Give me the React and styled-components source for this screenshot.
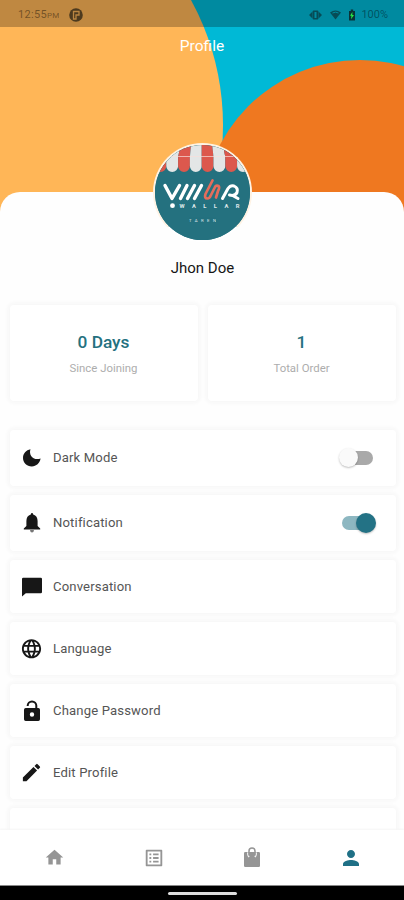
import React from "react";
import styled, { createGlobalStyle } from "styled-components";
import {
  MdHome,
  MdListAlt,
  MdPerson,
  MdLanguage,
  MdEdit,
} from "react-icons/md";

const GlobalStyle = createGlobalStyle`
  * { box-sizing: border-box; }
  body { margin: 0; background: #fff; font-family: Roboto, "Liberation Sans", sans-serif; }
`;

const Screen = styled.main`
  position: relative;
  display: flex;
  flex-direction: column;
  width: 404px;
  height: 900px;
  overflow: hidden;
  background: #fefefe;
`;

const Hero = styled.header`
  position: relative;
  flex: 0 0 192px;
`;

const HeroArt = styled.svg`
  position: absolute;
  top: 0;
  left: 0;
  display: block;
`;

const StatusBar = styled.div`
  position: relative;
  display: flex;
  align-items: center;
  height: 27px;
  padding: 2px 16px 0 18px;
  background: rgba(0, 0, 0, 0.25);
  color: rgba(0, 0, 0, 0.42);
  font-size: 11px;
  letter-spacing: 0.3px;
`;

const Meridiem = styled.span`
  font-size: 8px;
  padding-top: 2px;
`;

const StatusBadge = styled.svg`
  margin-left: 9px;
`;

const StatusRight = styled.div`
  display: flex;
  align-items: center;
  margin-left: auto;
  letter-spacing: 0;
`;

const StatusIcons = styled.svg`
  margin-right: 3px;
`;

const Title = styled.h1`
  position: relative;
  margin: 9px 0 0;
  color: #fff;
  font-size: 15.5px;
  font-weight: 400;
  line-height: 20px;
  text-align: center;
`;

const Sheet = styled.section`
  position: relative;
  flex: 1;
  min-height: 0;
  display: flex;
  flex-direction: column;
  align-items: stretch;
  padding: 0 8px 0 10px;
  border-radius: 20px 20px 0 0;
  background: #fefefe;
`;

const Avatar = styled.div`
  flex: none;
  align-self: center;
  width: 99px;
  height: 99px;
  margin: -49px 2px 0 0;
  border: 2px solid #fff3e4;
  border-bottom-color: #fff;
  border-radius: 50%;
  overflow: hidden;
  background: #24717f;

  svg { display: block; }
`;

const Name = styled.h2`
  margin: 16px 1px 0 0;
  color: #161616;
  font-size: 15px;
  font-weight: 400;
  line-height: 20px;
  text-align: center;
`;

const Stats = styled.div`
  display: grid;
  grid-template-columns: 1fr 1fr;
  gap: 10px;
  margin-top: 27px;
`;

const Card = styled.div`
  border-radius: 4px;
  background: #fff;
  box-shadow: 0 0 4px 2px #f6f6f6;
`;

const StatCard = styled(Card)`
  display: flex;
  flex-direction: column;
  align-items: center;
  height: 96px;
  padding: 26px 1px 0 0;
`;

const StatValue = styled.strong`
  color: #24717f;
  font-size: 17.3px;
  font-weight: 500;
  line-height: 22px;
`;

const StatLabel = styled.span`
  margin-top: 7px;
  color: #adadad;
  font-size: 11.4px;
  line-height: 16px;
`;

const Options = styled.ul`
  display: flex;
  flex-direction: column;
  gap: 9px;
  margin: 29px 0 0;
  padding: 0;
  list-style: none;
`;

const OptionRow = styled(Card).attrs({ as: "li" })`
  display: flex;
  flex: none;
  align-items: center;
  height: ${({ $tall }) => ($tall ? 56 : 53)}px;
  padding: 0 20px ${({ $tall }) => ($tall ? 1 : 0)}px 10px;
  color: #171717;
`;

const OptionIcon = styled.span`
  display: flex;
  justify-content: center;
  width: 23px;
  margin-right: 10px;
`;

const OptionLabel = styled.span`
  flex: 1;
  color: #555;
  font-size: 13.1px;
  letter-spacing: 0.15px;
`;

const Track = styled.span`
  display: flex;
  align-items: center;
  justify-content: ${({ $on }) => ($on ? "flex-end" : "flex-start")};
  width: 32px;
  height: 14px;
  margin-right: ${({ $on }) => ($on ? 2 : 3)}px;
  border-radius: 7px;
  background: ${({ $on }) => ($on ? "#8db7c1" : "#a9a9a9")};
`;

const Thumb = styled.span`
  flex: none;
  width: ${({ $on }) => ($on ? 20 : 19)}px;
  height: ${({ $on }) => ($on ? 20 : 19)}px;
  margin: 0 -2px;
  border-radius: 50%;
  background: ${({ $on }) => ($on ? "#237285" : "#fafafa")};
  box-shadow: 0 1px 2px rgba(0, 0, 0, 0.25);
`;

const BottomNav = styled.nav`
  position: relative;
  flex: 0 0 55px;
  display: grid;
  grid-template-columns: repeat(4, 98.7px);
  justify-content: center;
  align-items: center;
  padding-left: 2px;
  background: #fff;
  box-shadow: 0 -1px 2px #f5f5f5;
`;

const NavItem = styled.a`
  display: flex;
  justify-content: center;
  color: ${({ $active }) => ($active ? "#1f7086" : "#959595")};
`;

const GestureBar = styled.footer`
  position: relative;
  flex: 0 0 15px;
  display: flex;
  justify-content: center;
  align-items: center;
  padding-top: 1px;
  border-top: 1px solid #888;
  background: #000;
`;

const Handle = styled.span`
  width: 69px;
  height: 3px;
  border-radius: 2px;
  background: #ddd;
`;

const Moon = () => (
  <svg width="20" height="20" viewBox="0 0 20 20" fill="currentColor">
    <path d="M8.5 1.2C6.5 6.7 10.9 13 18.6 10.6C17.7 15.4 14.4 18.4 9.8 18.4C4.8 18.4 1 14.7 1 9.9C1 5.5 4.1 1.9 8.5 1.2Z" />
  </svg>
);

const Bell = () => (
  <svg width="20" height="22" viewBox="0 0 20 22">
    <path
      fill="currentColor"
      d="M10 1C9.3 1 8.9 1.6 8.8 2.5C5.8 3.4 4.4 5.8 4.4 8.9V14L1.8 16.4V17.4H18.2V16.4L15.6 14V8.9C15.6 5.8 14.2 3.4 11.2 2.5C11.1 1.6 10.7 1 10 1Z"
    />
    <path fill="#777" d="M8 18H12Q11.8 20.5 10 20.5Q8.2 20.5 8 18Z" />
  </svg>
);

const Chat = () => (
  <svg width="20" height="20" viewBox="0 0 20 20">
    <path fill="currentColor" d="M1.2 .8H18.8Q20 .8 20 2V15Q20 16.2 18.8 16.2H3.8L0 19.6V2Q0 .8 1.2 .8Z" />
  </svg>
);

const Lock = () => (
  <svg width="18" height="22" viewBox="0 0 18 22">
    <path
      d="M4.7 6V5.6A4.3 4.2 0 0 1 13.3 5.6V10"
      fill="none"
      stroke="currentColor"
      strokeWidth="2"
    />
    <path
      fill="currentColor"
      fillRule="evenodd"
      d="M2.7 8H15.3Q17 8 17 9.8V19.2Q17 21 15.3 21H2.7Q1 21 1 19.2V9.8Q1 8 2.7 8ZM9 12.3A2.2 2.2 0 1 0 9 16.7A2.2 2.2 0 0 0 9 12.3Z"
    />
  </svg>
);

const Bag = () => (
  <svg width="18" height="21" viewBox="0 0 18 21">
    <path
      fill="currentColor"
      d="M2.2 5H15.8Q17 5 17 6.2V18.8Q17 20 15.8 20H2.2Q1 20 1 18.8V6.2Q1 5 2.2 5Z"
    />
    <path d="M5 5.5Q4.4 7.5 6 10M13 5.5Q13.6 7.5 12 10" stroke="#f4f4f4" strokeWidth="1.6" fill="none" />
    <path d="M6 8.5V4A3 3 0 0 1 12 4V8.5" stroke="currentColor" strokeWidth="1.5" fill="none" />
  </svg>
);

const stripes = Array.from({ length: 9 }, (_, i) => i);

const Logo = () => (
  <svg width="95" height="95" viewBox="0 0 95 95">
    <rect width="95" height="95" fill="#24717f" />
    {stripes.map((i) => (
      <path
        key={i}
        d={`M${(-0.5 + i * 11.8) * 0.88 + 5.6} -2h10.4L${11.3 + i * 11.8} 12V21a5.9 6 0 0 1 -11.8 0V12z`}
        fill={i % 2 ? "#e3e6e6" : "#dc584d"}
      />
    ))}
    <path d="M0 11.5H95" stroke="#f7dedb" strokeWidth="1" opacity=".7" />
    <g fill="none" strokeLinecap="round" strokeLinejoin="round" strokeWidth="3.4">
      <path
        d="M10 40.5L17 53.5L24.5 40.5M32 40.5L25.5 53.5M39.5 40.5L32.5 53.5M46.5 40.5L39.5 53.5"
        stroke="#fff"
      />
      <path
        d="M57.5 35.5L50.5 49Q49 53.5 52.5 53.5Q54.5 53.5 56 50L59.5 43Q61 39.5 63.5 41Q65 42.5 63 46L61 52.5"
        stroke="#e56d5b"
        strokeWidth="2.7"
      />
      <path
        d="M67.5 53.5L73 43.5Q75.5 40 79 41Q83.5 43 82 47.5Q80 51.5 74.5 50M78.5 51L83 53.5"
        stroke="#fff"
        strokeWidth="3"
      />
    </g>
    <circle cx="17.5" cy="60.7" r="2.4" fill="#fff" />
    <g fill="#fff" fontFamily="Roboto, sans-serif">
      <text x="24.5" y="63" fontSize="5.8" fontWeight="700" textLength="60" opacity=".85">WALLAR</text>
      <text x="34" y="76.5" fontSize="4.3" textLength="27" opacity=".8">TAREN</text>
    </g>
  </svg>
);

const options = [
  { label: "Dark Mode", icon: <Moon />, on: false },
  { label: "Notification", icon: <Bell />, on: true },
  { label: "Conversation", icon: <Chat /> },
  { label: "Language", icon: <MdLanguage size={23.5} /> },
  { label: "Change Password", icon: <Lock /> },
  { label: "Edit Profile", icon: <MdEdit size={23} /> },
];

const navItems = [
  { name: "Home", icon: <MdHome size={21} /> },
  { name: "Orders", icon: <MdListAlt size={22} /> },
  { name: "Shop", icon: <Bag /> },
  { name: "Account", icon: <MdPerson size={24} />, active: true },
];

export default function App() {
  return (
    <>
      <GlobalStyle />
      <Screen>
        <Hero>
          <HeroArt width="404" height="214">
            <rect width="404" height="214" fill="#00b9d6" />
            <circle cx="-37" cy="125" r="260" fill="#ffb657" />
            <circle cx="360" cy="218" r="158" fill="#ef7820" />
          </HeroArt>
          <StatusBar>
            <span>12:55</span>
            <Meridiem>PM</Meridiem>
            <StatusBadge width="14" height="14" viewBox="0 0 14 14">
              <circle cx="7" cy="7" r="6.8" fill="#4d3a1e" />
              <path d="M4.5 11V3.5H10V7H7V11Z" fill="none" stroke="#b98541" strokeWidth="1.3" />
            </StatusBadge>
            <StatusRight>
              <StatusIcons width="50" height="14" viewBox="0 0 50 14">
                <g fill="#064c57">
                  <path d="M1 7L4.5 3.5V10.5ZM14 7L10.5 3.5V10.5Z" />
                  <rect x="4.7" y="2.5" width="5.6" height="9" rx="1" />
                  <path d="M22 4.5Q27.5 .5 33 4.5L27.5 11.5Z" />
                  <path d="M41 3H42.8V1.5H45.2V3H47V12.5H41Z" fill="#0a3237" />
                </g>
                <rect x="6.5" y="4" width="2" height="6" fill="#008ca2" />
                <path d="M24.5 5Q27.5 3.3 30.5 5" stroke="#008ca2" fill="none" />
                <path d="M44.4 4L42 7.8H43.5L43 11.2L46 7H44.3Z" fill="#27ee43" />
              </StatusIcons>
              100%
            </StatusRight>
          </StatusBar>
          <Title>Profile</Title>
        </Hero>
        <Sheet>
          <Avatar><Logo /></Avatar>
          <Name>Jhon Doe</Name>
          <Stats>
            <StatCard>
              <StatValue>0 Days</StatValue>
              <StatLabel>Since Joining</StatLabel>
            </StatCard>
            <StatCard>
              <StatValue>1</StatValue>
              <StatLabel>Total Order</StatLabel>
            </StatCard>
          </Stats>
          <Options>
            {options.map(({ label, icon, on }) => (
              <OptionRow key={label} $tall={on !== undefined}>
                <OptionIcon>{icon}</OptionIcon>
                <OptionLabel>{label}</OptionLabel>
                {on !== undefined && <Track $on={on}><Thumb $on={on} /></Track>}
              </OptionRow>
            ))}
            <OptionRow />
          </Options>
        </Sheet>
        <BottomNav>
          {navItems.map(({ name, icon, active }) => (
            <NavItem key={name} $active={active} aria-label={name}>{icon}</NavItem>
          ))}
        </BottomNav>
        <GestureBar><Handle /></GestureBar>
      </Screen>
    </>
  );
}
